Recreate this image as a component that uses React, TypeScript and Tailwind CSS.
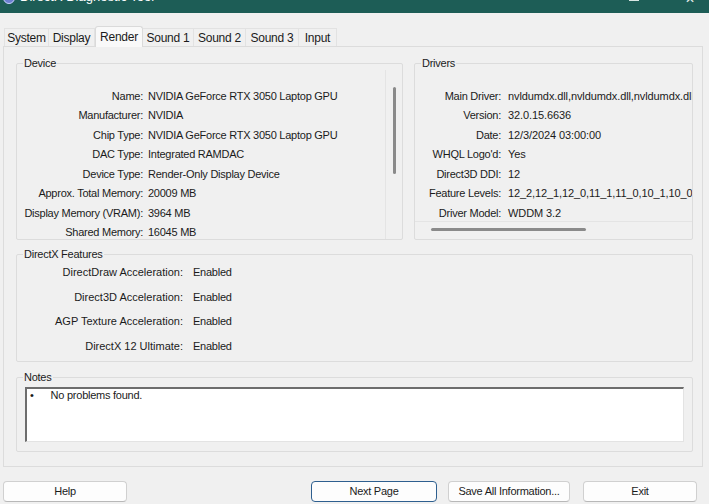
import React from "react";

const deviceRows: [string, string][] = [
  ["Name:", "NVIDIA GeForce RTX 3050 Laptop GPU"],
  ["Manufacturer:", "NVIDIA"],
  ["Chip Type:", "NVIDIA GeForce RTX 3050 Laptop GPU"],
  ["DAC Type:", "Integrated RAMDAC"],
  ["Device Type:", "Render-Only Display Device"],
  ["Approx. Total Memory:", "20009 MB"],
  ["Display Memory (VRAM):", "3964 MB"],
  ["Shared Memory:", "16045 MB"],
];

const driverRows: [string, string][] = [
  ["Main Driver:", "nvldumdx.dll,nvldumdx.dll,nvldumdx.dll,nvldumdx.dll"],
  ["Version:", "32.0.15.6636"],
  ["Date:", "12/3/2024 03:00:00"],
  ["WHQL Logo'd:", "Yes"],
  ["Direct3D DDI:", "12"],
  ["Feature Levels:", "12_2,12_1,12_0,11_1,11_0,10_1,10_0,9_3,9_2,9_1"],
  ["Driver Model:", "WDDM 3.2"],
];

const featureRows: [string, string][] = [
  ["DirectDraw Acceleration:", "Enabled"],
  ["Direct3D Acceleration:", "Enabled"],
  ["AGP Texture Acceleration:", "Enabled"],
  ["DirectX 12 Ultimate:", "Enabled"],
];

const tabs = ["System", "Display", "Render", "Sound 1", "Sound 2", "Sound 3", "Input"];
const tabWidths = ["w-[45px]", "w-[46px]", "w-[48px]", "w-[51px]", "w-[52px]", "w-[53px]", "w-[38px]"];

function Legend({ children }: { children: React.ReactNode }) {
  return <legend className="ml-[6px] px-[1px] leading-[14px]">{children}</legend>;
}

function Button({ label, className }: { label: string; className: string }) {
  return (
    <button
      className={
        "h-[21px] rounded-[4px] bg-[#fdfdfd] text-center leading-[19px] text-[#1b1b1b] " + className
      }
    >
      {label}
    </button>
  );
}

export default function App() {
  return (
    <div className="w-[709px] h-[504px] overflow-hidden bg-[#f0f0f0] text-[11px] tracking-[-0.25px] text-[#1b1b1b] font-['Liberation_Sans',Arial,sans-serif]">
      {/* Title bar (cut off) */}
      <div className="h-[13px] bg-[#1d5d56] overflow-hidden flex items-start">
        <div className="ml-[3px] -mt-[8px] w-[12px] h-[12px] rounded-full bg-[#6b7fd0] border border-[#c9d2ff]" />
        <div className="ml-[5px] -mt-[11px] text-[13px] leading-[16px] tracking-normal text-white">DirectX Diagnostic Tool</div>
        <div className="ml-auto -mt-[9px] mr-[46px] w-[10px] h-[10px] border border-[#d8e6e3]" />
        <div className="-mt-[7px] mr-[14px] text-[12px] leading-[12px] text-[#e8f0ef]">✕</div>
      </div>

      {/* Tabs */}
      <div className="flex items-end h-[33px] pl-[4px]">
        {tabs.map((t, i) =>
          t === "Render" ? (
            <div
              key={t}
              className={
                tabWidths[i] +
                " h-[21px] -mb-[1px] relative z-10 bg-[#f9f9f9] border border-b-0 border-[#dadada] rounded-t-[3px] flex items-center justify-center text-[12px]"
              }
            >
              {t}
            </div>
          ) : (
            <div
              key={t}
              className={
                tabWidths[i] +
                " h-[18px] bg-[#f0f0f0] border-t border-r border-[#e2e2e2] first:border-l flex items-center justify-center text-[12px]"
              }
            >
              {t}
            </div>
          )
        )}
      </div>

      {/* Tab pane */}
      <div className="ml-[3px] w-[700px] h-[421px] border border-[#dcdcdc] bg-[#f0f0f0] pt-[9px] pl-[12px]">
        <div className="flex gap-[11px]">
          {/* Device */}
          <fieldset className="w-[387px] min-w-0 shrink-0 h-[184px] border border-[#dcdcdc] rounded-[2px] overflow-hidden">
            <Legend>Device</Legend>
            <div className="flex h-[169px]">
              <div className="flex-1 min-w-0 pt-[17px] overflow-hidden">
                {deviceRows.map(([k, v]) => (
                  <div key={k} className="flex leading-[19.45px] whitespace-nowrap">
                    <div className="w-[126px] shrink-0 text-right">{k}</div>
                    <div className="ml-[5px]">{v}</div>
                  </div>
                ))}
              </div>
              <div className="w-[17px] shrink-0 border-l border-[#e4e4e4] flex justify-center pt-[17px]">
                <div className="w-[3px] h-[87px] bg-[#8a8a8a] rounded-full" />
              </div>
            </div>
          </fieldset>

          {/* Drivers */}
          <fieldset className="w-[279px] min-w-0 shrink-0 h-[184px] border border-[#dcdcdc] rounded-[2px] overflow-hidden">
            <Legend>Drivers</Legend>
            <div className="flex flex-col h-[169px]">
              <div className="h-[152px] pt-[17px] overflow-hidden border-b border-[#e4e4e4]">
                {driverRows.map(([k, v]) => (
                  <div key={k} className="flex leading-[19.45px] whitespace-nowrap">
                    <div className="w-[86px] shrink-0 text-right">{k}</div>
                    <div className="ml-[7px] tracking-[-0.1px]">{v}</div>
                  </div>
                ))}
              </div>
              <div className="flex-1 pl-[16px] pt-[6px]">
                <div className="w-[155px] h-[3px] bg-[#8a8a8a] rounded-full" />
              </div>
            </div>
          </fieldset>
        </div>

        {/* DirectX Features */}
        <fieldset className="mt-[7px] w-[677px] min-w-0 h-[115px] border border-[#dcdcdc] rounded-[2px]">
          <Legend>DirectX Features</Legend>
          <div className="-mt-[1px]">
            {featureRows.map(([k, v]) => (
              <div key={k} className="flex leading-[24.6px] whitespace-nowrap">
                <div className="w-[166px] shrink-0 text-right tracking-[0px]">{k}</div>
                <div className="ml-[10px]">{v}</div>
              </div>
            ))}
          </div>
        </fieldset>

        {/* Notes */}
        <fieldset className="mt-[8px] w-[677px] min-w-0 h-[82px] border border-[#dcdcdc] rounded-[2px]">
          <Legend>Notes</Legend>
          <div className="ml-[8px] mt-[3px] w-[659px] h-[55px] bg-white border-t-2 border-l-2 border-[#6d6d6d] border-r border-b border-r-[#e3e3e3] border-b-[#e3e3e3] flex items-start">
            <span className="ml-[3px] -mt-[1px] leading-[14px]">•</span>
            <span className="ml-[17px] -mt-[1px] leading-[14px]">No problems found.</span>
          </div>
        </fieldset>
      </div>

      {/* Buttons */}
      <div className="flex mt-[14px] pl-[3px]">
        <Button label="Help" className="w-[124px] border border-[#d0d0d0] border-b-[#b8b8b8]" />
        <Button label="Next Page" className="ml-[184px] w-[126px] border border-[#2e5f8f]" />
        <Button label="Save All Information..." className="ml-[11px] w-[122px] border border-[#d0d0d0] border-b-[#b8b8b8]" />
        <Button label="Exit" className="ml-[13px] w-[114px] border border-[#d0d0d0] border-b-[#b8b8b8]" />
      </div>
    </div>
  );
}
